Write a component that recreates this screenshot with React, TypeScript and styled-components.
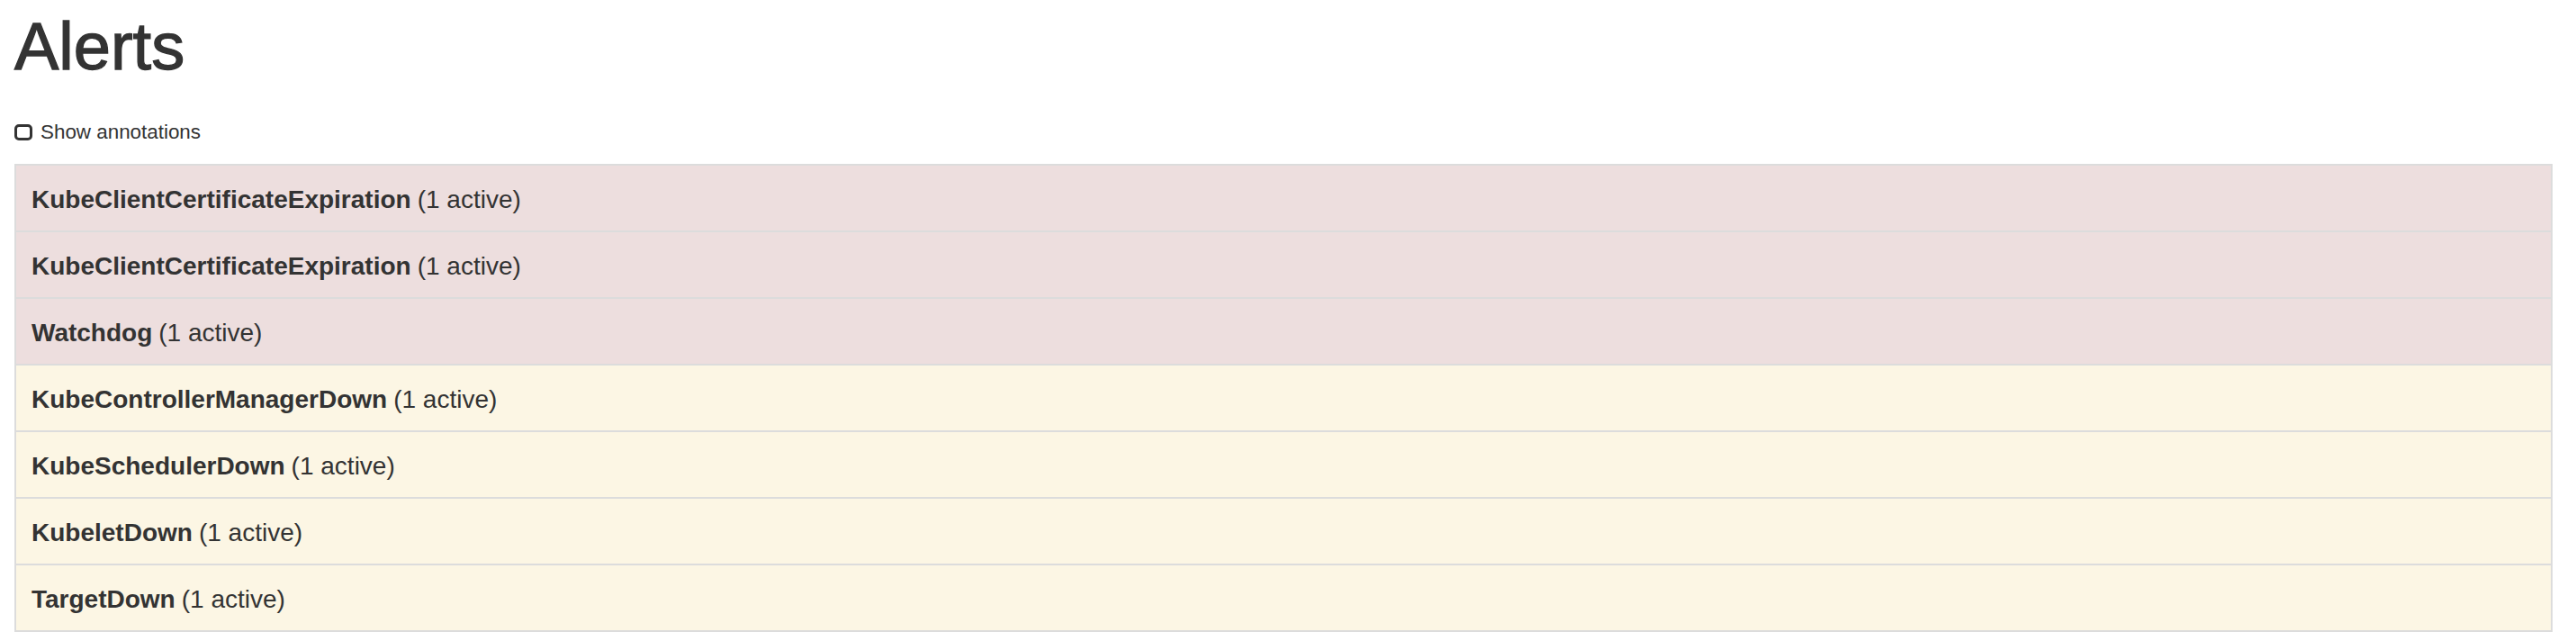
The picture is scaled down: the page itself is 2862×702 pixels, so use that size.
import React, { useState } from 'react';
import styled, { createGlobalStyle } from 'styled-components';

const GlobalStyle = createGlobalStyle`
  html, body {
    margin: 0;
    padding: 0;
    background: #fff;
  }
  body {
    font-family: "Liberation Sans", Helvetica, Arial, sans-serif;
    color: #333;
  }
`;

const Page = styled.div`
  padding: 9px 26px 0 16px;
`;

// Liberation has no medium weight, a thin stroke makes it read like the original
const Title = styled.h1`
  margin: 0;
  font-size: 74px;
  font-weight: 500;
  line-height: normal;
  color: #333;
  -webkit-text-stroke: 1.3px #333;
`;

const Toggle = styled.label`
  display: flex;
  align-items: center;
  gap: 9px;
  margin-top: 40px;
  font-size: 22.4px;
  line-height: 25px;
  color: #333;
  cursor: pointer;
`;

const Box = styled.input`
  appearance: none;
  margin: 0;
  width: 20px;
  height: 18px;
  border: 3px solid #333;
  border-radius: 5px;
  background: #fff;
  cursor: pointer;

  &:checked {
    background: #333;
  }
`;

const AlertList = styled.div`
  margin-top: 23px;
  border: 2px solid #dcdcdc;
  display: flex;
  flex-direction: column;
`;

const AlertRow = styled.div<{ $state: 'firing' | 'pending' }>`
  height: 72px;
  display: flex;
  align-items: center;
  padding: 3px 17px 0;
  box-sizing: border-box;
  font-size: 28px;
  color: #333;
  background: ${(p) => (p.$state === 'firing' ? '#eddede' : '#fcf6e4')};

  & + & {
    border-top: 2px solid #dcdcdc;
    height: 74px;
  }
`;

const Name = styled.strong`
  font-weight: 700;
  margin-right: 7px;
`;

const alerts: { name: string; count: number; state: 'firing' | 'pending' }[] = [
  { name: 'KubeClientCertificateExpiration', count: 1, state: 'firing' },
  { name: 'KubeClientCertificateExpiration', count: 1, state: 'firing' },
  { name: 'Watchdog', count: 1, state: 'firing' },
  { name: 'KubeControllerManagerDown', count: 1, state: 'pending' },
  { name: 'KubeSchedulerDown', count: 1, state: 'pending' },
  { name: 'KubeletDown', count: 1, state: 'pending' },
  { name: 'TargetDown', count: 1, state: 'pending' },
];

const App: React.FC = () => {
  const [showAnnotations, setShowAnnotations] = useState(false);

  return (
    <Page>
      <GlobalStyle />
      <Title>Alerts</Title>
      <Toggle>
        <Box
          type="checkbox"
          checked={showAnnotations}
          onChange={(e) => setShowAnnotations(e.target.checked)}
        />
        Show annotations
      </Toggle>
      <AlertList>
        {alerts.map((a, i) => (
          <AlertRow key={i} $state={a.state}>
            <Name>{a.name}</Name>({a.count} active)
          </AlertRow>
        ))}
      </AlertList>
    </Page>
  );
};

export default App;
